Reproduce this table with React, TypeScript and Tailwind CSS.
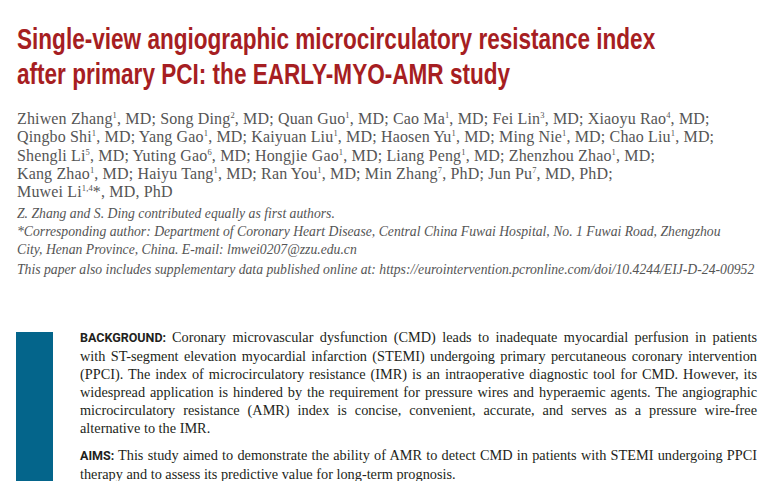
import React from 'react';

const serif = { fontFamily: '"Liberation Serif", serif' };
const label = { fontFamily: 'Roboto, "Liberation Sans", sans-serif' };

type Author = { name: string; aff: string; star?: boolean; deg: string; last?: boolean };

const authorLines: Author[][] = [
  [
    { name: 'Zhiwen Zhang', aff: '1', deg: 'MD' },
    { name: 'Song Ding', aff: '2', deg: 'MD' },
    { name: 'Quan Guo', aff: '1', deg: 'MD' },
    { name: 'Cao Ma', aff: '1', deg: 'MD' },
    { name: 'Fei Lin', aff: '3', deg: 'MD' },
    { name: 'Xiaoyu Rao', aff: '4', deg: 'MD' },
  ],
  [
    { name: 'Qingbo Shi', aff: '1', deg: 'MD' },
    { name: 'Yang Gao', aff: '1', deg: 'MD' },
    { name: 'Kaiyuan Liu', aff: '1', deg: 'MD' },
    { name: 'Haosen Yu', aff: '1', deg: 'MD' },
    { name: 'Ming Nie', aff: '1', deg: 'MD' },
    { name: 'Chao Liu', aff: '1', deg: 'MD' },
  ],
  [
    { name: 'Shengli Li', aff: '5', deg: 'MD' },
    { name: 'Yuting Gao', aff: '6', deg: 'MD' },
    { name: 'Hongjie Gao', aff: '1', deg: 'MD' },
    { name: 'Liang Peng', aff: '1', deg: 'MD' },
    { name: 'Zhenzhou Zhao', aff: '1', deg: 'MD' },
  ],
  [
    { name: 'Kang Zhao', aff: '1', deg: 'MD' },
    { name: 'Haiyu Tang', aff: '1', deg: 'MD' },
    { name: 'Ran You', aff: '1', deg: 'MD' },
    { name: 'Min Zhang', aff: '7', deg: 'PhD' },
    { name: 'Jun Pu', aff: '7', deg: 'MD, PhD' },
  ],
  [{ name: 'Muwei Li', aff: '1,4', star: true, deg: 'MD, PhD', last: true }],
];

// 摘要的每一行（两端对齐，保持原文断行）
const background = [
  'Coronary microvascular dysfunction (CMD) leads to inadequate myocardial perfusion in patients',
  'with ST-segment elevation myocardial infarction (STEMI) undergoing primary percutaneous coronary intervention',
  '(PPCI). The index of microcirculatory resistance (IMR) is an intraoperative diagnostic tool for CMD. However, its',
  'widespread application is hindered by the requirement for pressure wires and hyperaemic agents. The angiographic',
  'microcirculatory resistance (AMR) index is concise, convenient, accurate, and serves as a pressure wire-free',
];

const Sup = ({ children }: { children: React.ReactNode }) => (
  <sup className="text-[8.5px] top-[-0.7em]">{children}</sup>
);

const Line = ({ children }: { children: React.ReactNode }) => (
  <div className="whitespace-nowrap text-justify [text-align-last:justify]">{children}</div>
);

export default function App() {
  return (
    <div className="w-[773px] h-[481px] overflow-hidden bg-white">
      <div className="pl-[17px] pt-[22px]">
        {/* 标题 */}
        <h1
          className="w-[820px] whitespace-nowrap origin-left scale-x-[0.778] text-[#a61e22] font-bold text-[29px] leading-[35px]"
          style={{ fontFamily: '"Liberation Sans", sans-serif' }}
        >
          Single-view angiographic microcirculatory resistance index
          <br />
          after primary PCI: the EARLY-MYO-AMR study
        </h1>

        {/* 作者 */}
        <div
          className="mt-[18px] text-[#555555] text-[16px] leading-[18.3px] tracking-[0.15px] whitespace-nowrap"
          style={serif}
        >
          {authorLines.map((line, i) => (
            <div key={i}>
              {line.map((a, j) => (
                <span key={j}>
                  {a.name}
                  <Sup>{a.aff}</Sup>
                  {a.star ? '*' : ''}, {a.deg}
                  {a.last ? '' : '; '}
                </span>
              ))}
            </div>
          ))}
        </div>

        {/* 备注 */}
        <div className="mt-[3px] text-[#555555] text-[13.7px] italic leading-[19px] whitespace-nowrap" style={serif}>
          <p>Z. Zhang and S. Ding contributed equally as first authors.</p>
          <p className="leading-[18px]">
            *Corresponding author: Department of Coronary Heart Disease, Central China Fuwai Hospital, No. 1 Fuwai Road, Zhengzhou
            <br />
            City, Henan Province, China. E-mail: lmwei0207@zzu.edu.cn
          </p>
          <p className="mt-[1px]">
            This paper also includes supplementary data published online at: https://eurointervention.pcronline.com/doi/10.4244/EIJ-D-24-00952
          </p>
        </div>
      </div>

      {/* 摘要 */}
      <div className="flex mt-[49px]">
        <div className="ml-[16px] mt-[4px] w-[37px] h-[200px] bg-[#04658b] shrink-0" />
        <div className="ml-[27px] w-[677px] text-[#231f20] text-[14.3px] leading-[18px]" style={serif}>
          {background.map((t, i) => (
            <Line key={i}>
              {i === 0 && (
                <span className="font-bold text-[12.5px]" style={label}>
                  BACKGROUND:{' '}
                </span>
              )}
              {t}
            </Line>
          ))}
          <div>alternative to the IMR.</div>

          <div className="mt-[9px]">
            <Line>
              <span className="font-bold text-[12.5px]" style={label}>
                AIMS:{' '}
              </span>
              This study aimed to demonstrate the ability of AMR to detect CMD in patients with STEMI undergoing PPCI
            </Line>
            <div>therapy and to assess its predictive value for long-term prognosis.</div>
          </div>
        </div>
      </div>
    </div>
  );
}
